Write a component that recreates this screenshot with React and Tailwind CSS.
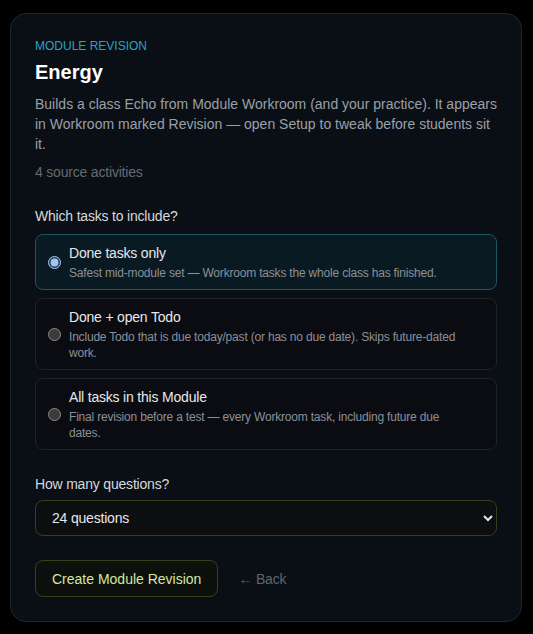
import React, { useState } from "react";

const OPTIONS = [
  {
    id: "done",
    title: "Done tasks only",
    hint: "Safest mid-module set — Workroom tasks the whole class has finished.",
  },
  {
    id: "done-todo",
    title: "Done + open Todo",
    hint: "Include Todo that is due today/past (or has no due date). Skips future-dated work.",
  },
  {
    id: "all",
    title: "All tasks in this Module",
    hint: "Final revision before a test — every Workroom task, including future due dates.",
  },
];

function TaskOption({ option, selected, onSelect }) {
  return (
    <label
      className={
        selected
          ? "flex items-center gap-2 rounded-lg border border-[#1d5566] bg-[#0a1a22] px-3 py-2 cursor-pointer"
          : "flex items-center gap-2 rounded-lg border border-[#1f2329] bg-[#0a0c11] px-3 py-2 cursor-pointer"
      }
    >
      <input
        type="radio"
        name="task-scope"
        className="h-[13px] w-[13px] shrink-0"
        checked={selected}
        onChange={() => onSelect(option.id)}
      />
      <span className="flex flex-col pr-4">
        <span className="text-sm leading-5 text-[#e6e8eb]">{option.title}</span>
        <span className="mt-0.5 text-xs leading-4 text-[#8a9099]">{option.hint}</span>
      </span>
    </label>
  );
}

export default function App() {
  const [scope, setScope] = useState("done");
  const [count, setCount] = useState("24");

  return (
    <div className="min-h-screen bg-black pt-[13px] pl-[10px] [font-family:'Liberation_Sans',Arial,sans-serif] tracking-[-0.012em] [color-scheme:dark]">
      <div className="w-[512px] rounded-2xl border border-[#172833] bg-[#0a0e15] p-6">
        <div className="text-xs leading-4 tracking-normal text-[#2aa3c2]">MODULE REVISION</div>
        <h1 className="mt-1 text-xl leading-7 font-bold tracking-normal text-white">Energy</h1>
        <p className="mt-2 text-sm leading-5 tracking-normal text-[#9aa0a8]">
          Builds a class Echo from Module Workroom (and your practice). It appears in Workroom
          marked Revision — open Setup to tweak before students sit it.
        </p>
        <p className="mt-2 text-sm leading-5 text-[#656b73]">4 source activities</p>

        <div className="mt-6 text-sm leading-5 text-[#d6d9dd]">Which tasks to include?</div>
        <div className="mt-2 flex flex-col gap-2">
          {OPTIONS.map((o) => (
            <TaskOption key={o.id} option={o} selected={scope === o.id} onSelect={setScope} />
          ))}
        </div>

        <div className="mt-6 text-sm leading-5 text-[#d6d9dd]">How many questions?</div>
        <select
          value={count}
          onChange={(e) => setCount(e.target.value)}
          className="mt-1.5 block h-9 w-full rounded-lg border border-[#343f1c] bg-[#0d0e0f] px-3 text-sm text-[#e6e8eb] outline-none"
        >
          <option value="12">12 questions</option>
          <option value="16">16 questions</option>
          <option value="20">20 questions</option>
          <option value="24">24 questions</option>
          <option value="30">30 questions</option>
        </select>

        <div className="mt-6 flex items-center gap-5">
          <button className="flex h-[37px] items-center rounded-lg border border-[#34411b] bg-[#0d100c] px-4 text-sm tracking-normal text-[#d3e7a1]">
            Create Module Revision
          </button>
          <button className="text-sm text-[#5f656d]">← Back</button>
        </div>
      </div>
    </div>
  );
}
